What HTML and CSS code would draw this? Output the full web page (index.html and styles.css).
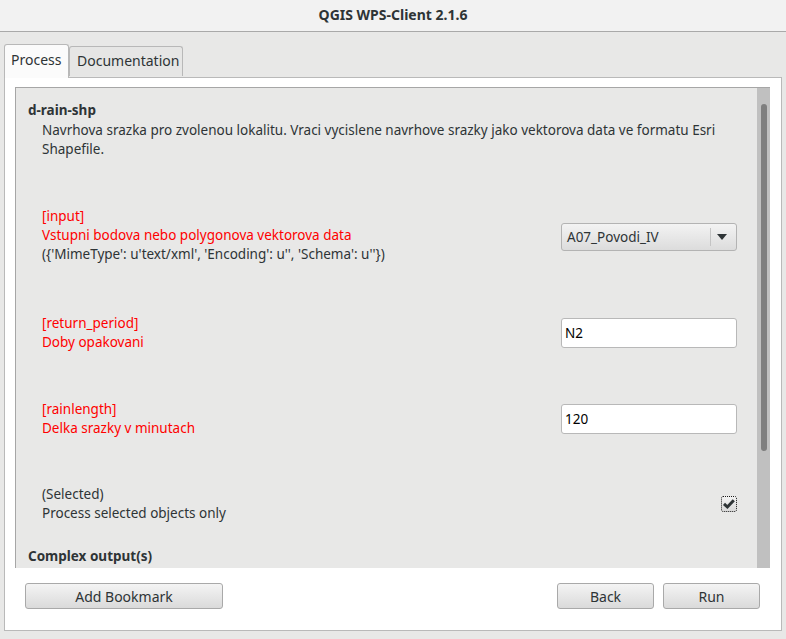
FILE: index.html
```html
<!DOCTYPE html>
<html>
<head>
<meta charset="utf-8">
<title>QGIS WPS-Client 2.1.6</title>
<link rel="stylesheet" href="styles.css">
</head>
<body>
<div class="window">
  <div class="titlebar">QGIS WPS-Client 2.1.6</div>
  <div class="main">
    <div class="tabs">
      <div class="tab active">Process</div>
      <div class="tab">Documentation</div>
    </div>
    <div class="pane">
      <div class="scrollarea">
        <div class="content">
          <div class="proc-title">d-rain-shp</div>
          <div class="proc-desc">Navrhova srazka pro zvolenou lokalitu. Vraci vycislene navrhove srazky jako vektorova data ve formatu Esri Shapefile.</div>

          <div class="row row-input">
            <div class="label">
              <div class="req">[input]</div>
              <div class="req">Vstupni bodova nebo polygonova vektorova data</div>
              <div>({'MimeType': u'text/xml', 'Encoding': u'', 'Schema': u''})</div>
            </div>
            <div class="combo">
              <span class="combo-text">A07_Povodi_IV</span>
              <span class="combo-sep"></span>
              <svg class="combo-arrow" width="10" height="6" viewBox="0 0 10 6"><path d="M0 0 L10 0 L5 6 Z" fill="#2e3436"/></svg>
            </div>
          </div>

          <div class="row row-period">
            <div class="label">
              <div class="req">[return_period]</div>
              <div class="req">Doby opakovani</div>
            </div>
            <div class="field">N2</div>
          </div>

          <div class="row row-rain">
            <div class="label">
              <div class="req">[rainlength]</div>
              <div class="req">Delka srazky v minutach</div>
            </div>
            <div class="field">120</div>
          </div>

          <div class="row row-sel">
            <div class="label">
              <div>(Selected)</div>
              <div>Process selected objects only</div>
            </div>
            <div class="check-wrap">
              <svg class="check" width="16" height="16" viewBox="0 0 16 16">
                <defs><linearGradient id="cg" x1="0" y1="0" x2="0" y2="1"><stop offset="0" stop-color="#f4f4f4"/><stop offset="1" stop-color="#d8d8d8"/></linearGradient></defs>
                <rect x="0.5" y="0.5" width="15" height="15" rx="1.5" fill="url(#cg)" stroke="#1a1a1a" stroke-dasharray="1 1"/>
                <path d="M3 7.8 L6.4 11 L12.8 4.2" fill="none" stroke="#2e3436" stroke-width="3" stroke-linejoin="miter"/>
              </svg>
            </div>
          </div>

          <div class="section">Complex output(s)</div>
        </div>
        <div class="scrollbar"><div class="handle"></div></div>
      </div>
      <div class="buttons">
        <button class="btn btn-bookmark">Add Bookmark</button>
        <div class="spacer"></div>
        <button class="btn btn-small">Back</button>
        <button class="btn btn-small">Run</button>
      </div>
    </div>
  </div>
</div>
</body>
</html>
```
FILE: styles.css
```css
html, body {
  margin: 0;
  padding: 0;
}
body {
  width: 786px;
  height: 639px;
  overflow: hidden;
  background: #e8e8e7;
  font-family: "Noto Sans", "Open Sans", sans-serif;
  font-size: 13.5px;
  color: #2e3436;
}
.window {
  width: 786px;
  height: 639px;
  display: flex;
  flex-direction: column;
}
.titlebar {
  height: 32px;
  box-sizing: border-box;
  border-bottom: 1px solid #a9a9a9;
  background: #f2f2f2;
  text-align: center;
  font-weight: bold;
  line-height: 29px;
  font-size: 14px;
}
.main {
  padding: 12px 4px 0 4px;
}
.tabs {
  display: flex;
  align-items: flex-end;
  height: 33px;
  position: relative;
  z-index: 1;
}
.tab {
  box-sizing: border-box;
  border: 1px solid #b8b8b8;
  border-bottom: none;
  border-radius: 3px 3px 0 0;
  background: #e6e6e5;
  height: 30px;
  line-height: 28px;
  padding: 0 7px;
  width: 114px;
  margin-bottom: 1px;
  font-size: 14px;
}
.tab.active {
  background: #fbfbfb;
  height: 34px;
  width: 65px;
  line-height: 30px;
  margin-bottom: -1px;
  padding: 0 6px;
}
.pane {
  box-sizing: border-box;
  height: 554px;
  border: 1px solid #b9b9b9;
  background: #ffffff;
  padding: 9px 11px 0 10px;
  display: flex;
  flex-direction: column;
}
.scrollarea {
  height: 481px;
  box-sizing: border-box;
  border-top: 1px solid #a6a6a6;
  border-left: 1px solid #a6a6a6;
  background: #e8e8e7;
  display: flex;
  overflow: hidden;
}
.content {
  flex: 1;
  padding: 13px 20px 0 12px;
  line-height: 19px;
}
.proc-title {
  font-weight: bold;
}
.proc-desc {
  padding-left: 14px;
  padding-top: 1px;
}
.row {
  display: flex;
  align-items: center;
  justify-content: space-between;
  padding-left: 14px;
}
.label {
  line-height: 19px;
}
.req {
  color: #ff0000;
}
.row-input { margin-top: 48px; }
.row-period { margin-top: 50px; }
.row-rain { margin-top: 48px; }
.row-sel { margin-top: 47px; }
.section {
  font-weight: bold;
  margin-top: 24px;
}
.combo {
  box-sizing: border-box;
  width: 176px;
  height: 28px;
  margin-top: 3px;
  border: 1px solid #b3b3b3;
  border-radius: 3px;
  background: linear-gradient(#f3f3f3, #dcdcdc);
  display: flex;
  align-items: center;
  padding-left: 5px;
}
.combo-text {
  flex: 1;
}
.combo-sep {
  width: 1px;
  height: 18px;
  background: #c4c4c4;
}
.combo-arrow {
  margin: 0 9px 0 6px;
}
.field {
  box-sizing: border-box;
  width: 176px;
  height: 30px;
  border: 1px solid #b8b8b8;
  border-radius: 3px;
  background: #ffffff;
  color: #000;
  line-height: 28px;
  padding-left: 3px;
}
.check-wrap {
  width: 176px;
  display: flex;
  justify-content: flex-end;
}
.check {
  display: block;
}
.scrollbar {
  width: 13px;
  background: #c0c0c0;
  padding: 16px 0 0 4px;
  box-sizing: border-box;
}
.handle {
  width: 6px;
  height: 347px;
  border-radius: 3px;
  background: #7f7f7f;
}
.buttons {
  display: flex;
  gap: 9px;
  margin-top: 15px;
  padding: 0 10px 0 10px;
}
.spacer {
  flex: 1;
}
.btn {
  box-sizing: border-box;
  height: 26px;
  border: 1px solid #a9a9a9;
  border-radius: 3px;
  background: linear-gradient(#f4f4f4, #dadada);
  font-family: "Noto Sans", "Open Sans", sans-serif;
  font-size: 14px;
  color: #2e3436;
  padding: 0;
}
.btn-bookmark {
  width: 198px;
}
.btn-small {
  width: 97px;
}
```
